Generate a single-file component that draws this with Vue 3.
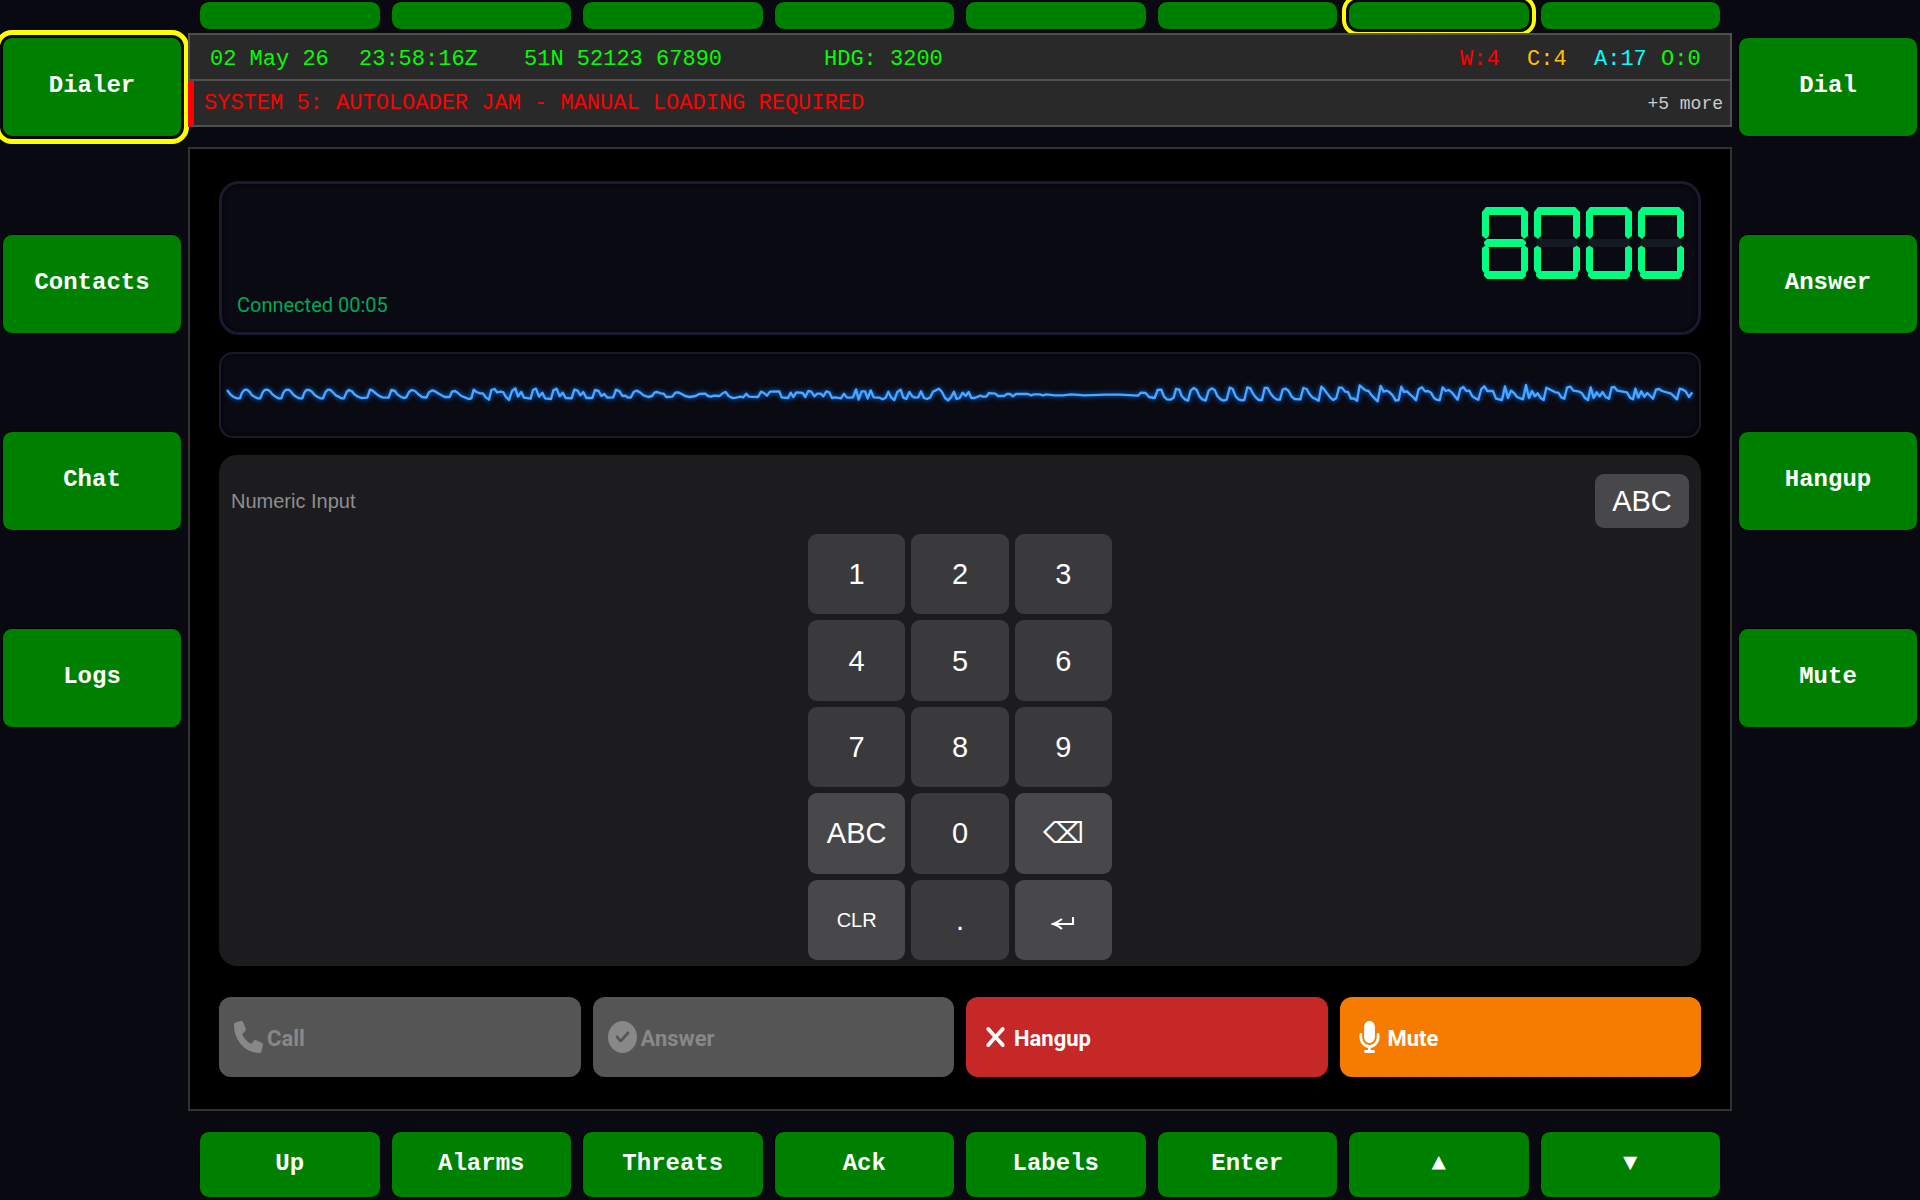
<script setup>
import { ref } from 'vue'

const topKeys = [1, 2, 3, 4, 5, 6, 7, 8]
const activeTop = ref(7)
const leftKeys = ['Dialer', 'Contacts', 'Chat', 'Logs']
const activeLeft = ref('Dialer')
const rightKeys = ['Dial', 'Answer', 'Hangup', 'Mute']
const bottomKeys = ['Up', 'Alarms', 'Threats', 'Ack', 'Labels', 'Enter', '▲', '▼']

const counters = [
  { text: 'W:4', cls: 'warning' },
  { text: 'C:4', cls: 'caution' },
  { text: 'A:17', cls: 'advisory' },
  { text: 'O:0', cls: 'other' },
]

// Seven-segment display: a top, b/c right, d bottom, e/f left, g middle
const segments = {
  a: '4,0 41,0 46,5 43,8 3,8 0,5',
  b: '46,5 42,3 39,7 39,29 42,32 46,29',
  c: '46,41 42,38 39,41 39,64 43,67 46,63',
  d: '2,67 5,64 41,64 44,67 44,69 41,72 5,72 2,69',
  e: '0,41 4,38 7,41 7,64 3,67 0,63',
  f: '0,5 4,3 7,7 7,29 4,32 0,29',
  g: '2,35 5,32 41,32 44,35 44,37 41,40 5,40 2,37',
}
const lit = { 8: 'abcdefg', 0: 'abcdef' }
const number = ref('8000')

// Audio trace, split into blocks; x is relative to the block start
const blocks = [
  {
    start: -52,
    samples:
      '52,150 62,163 72,171 82,175 91,175 97,158 104,150 112,149 120,156 127,166 136,171 144,175 152,175 159,157 165,150 174,149 182,155 188,163 198,170 206,175 215,175 221,158 228,150 237,149 244,155 252,165 261,171 269,175 278,175 284,158 290,150 299,150 307,155 315,165 323,170 332,175 340,175 347,157 354,149 362,150 370,157 378,166 387,170 395,175 403,175 411,156 418,150 427,154 434,163 445,170 455,174 473,173 481,149 489,152 497,159 507,167 518,172 537,173 545,150 556,153 563,163 573,170 582,174 590,172 598,156 606,150 616,153 625,162 637,171 650,173 658,157 668,151 678,155 690,163 705,171 720,171 727,155 736,153 745,159 755,168 767,173 777,177 785,175 792,149 800,156 812,160 820,160 828,172 838,179 845,150 855,147 862,157 873,155 881,157 888,170 898,180 907,153 917,145 925,170 935,156 943,173 963,176 970,150 979,146 988,170 998,158 1006,175 1024,177 1031,151 1041,146 1050,169 1059,158 1068,174 1086,175 1094,149 1104,152 1112,166 1121,156 1130,174 1148,174 1156,150 1167,153 1175,168 1184,162 1193,173 1211,172 1219,149 1230,154 1238,168 1247,167 1256,173 1264,172 1272,156 1281,152 1291,157 1302,166 1316,171 1327,168 1335,157 1343,156 1353,160 1362,161 1370,171 1388,170 1397,158 1406,157 1416,162 1426,168 1440,171 1458,168 1468,162 1487,161 1495,168 1505,170 1512,167',
  },
  {
    start: 1478,
    samples:
      '0,168 10,159 18,156 27,168 38,174 50,173 62,170 71,172 80,161 88,170 115,171 124,155 133,159 142,167 151,155 179,154 186,172 205,174 213,158 221,171 230,157 249,159 257,171 266,153 275,155 284,169 293,161 303,161 311,169 320,154 329,157 337,174 346,172 364,175 373,161 382,173 400,172 409,148 417,179 426,154 436,154 444,176 453,151 462,172 480,173 489,178 498,173 506,155 515,173 524,180 533,156 543,149 551,173 560,177 569,156 578,169 586,173 596,172 604,154 613,174 622,177 631,173 640,155 649,151 658,146 667,156 676,174 685,181 694,172 703,155 711,177 720,174 729,158 738,168 747,156 755,174 765,174 782,167 790,170 800,170 808,159 818,160 827,161 835,168 853,168 862,162 871,162 880,169 889,162 925,162 934,166 943,163 960,163 970,166 980,163 1005,166 1030,166 1055,163 1095,166 1160,164 1200,164 1255,167 1263,158 1278,159 1288,171 1305,174 1314,150 1325,149 1333,170 1342,178 1352,179 1362,173 1369,147 1379,149 1386,168 1396,178 1405,182 1413,152 1422,144 1431,150',
  },
  {
    start: 2918,
    samples:
      '0,170 8,178 18,182 27,152 36,145 45,150 53,168 63,178 72,182 81,179 90,143 99,147 108,169 117,178 126,181 134,180 143,142 152,145 161,163 170,174 178,180 187,180 195,144 204,144 213,161 222,172 232,179 241,179 249,149 258,146 267,153 276,170 285,177 302,178 311,144 321,147 330,163 338,172 348,177 357,182 365,140 374,149 383,161 392,173 401,180 410,174 418,143 427,143 436,155 445,156 454,176 463,175 472,183 480,136 489,144 498,151 507,153 516,166 525,175 534,184 543,138 552,155 561,152 570,157 579,166 588,182 597,180 605,140 613,156 622,154 631,163 640,171 649,181 657,148 667,142 676,154 685,153 694,158 703,174 711,179 720,181 729,142 738,153 747,150 756,157 765,168 774,179 782,147 791,141 800,153 809,152 818,169 827,175 836,179 845,147 854,139 863,153 880,153 889,176 907,180 916,139 925,174 934,152 943,159 952,171 970,178 979,135 988,174 997,153 1006,169 1014,160 1023,174 1032,180 1040,143 1067,157 1076,158 1085,172 1094,176 1102,143 1112,140 1121,152 1139,155 1147,160 1156,174 1165,180 1173,142 1182,174 1191,157 1200,169 1209,156 1218,171 1228,176 1236,142 1244,141 1253,152 1282,157 1291,173 1300,178 1307,146 1316,173 1325,154 1334,170 1343,159 1352,168 1360,176 1369,149 1378,147 1387,153 1414,161 1423,169 1432,178 1440,146 1450,149 1458,154 1468,171 1478,157',
  },
]
const trace = blocks
  .flatMap(({ start, samples }) =>
    samples.split(' ').map((pair) => {
      const [x, y] = pair.split(',').map(Number)
      return `${x + start},${y}`
    })
  )
  .join(' ')

const pad = [
  { label: '1' }, { label: '2' }, { label: '3' },
  { label: '4' }, { label: '5' }, { label: '6' },
  { label: '7' }, { label: '8' }, { label: '9' },
  { label: 'ABC', cls: 'function' }, { label: '0' }, { label: '⌫', cls: 'function', name: 'Backspace' },
  { label: 'CLR', cls: 'function small' }, { label: '.' }, { label: '', cls: 'function', name: 'Enter', icon: true },
]

const actions = [
  {
    label: 'Call', disabled: true, box: '0 0 512 512',
    icon: 'M164.9 24.6c-7.7-18.6-28-28.5-47.4-23.2l-88 24C12.1 30.2 0 46 0 64C0 311.4 200.6 512 448 512c18 0 33.8-12.1 38.6-29.5l24-88c5.3-19.4-4.6-39.7-23.2-47.4l-96-40c-16.3-6.8-35.2-2.1-46.3 11.6L304.7 368C234.3 334.7 177.3 277.7 144 207.3L193.3 167c13.7-11.2 18.4-30 11.6-46.3l-40-96z',
  },
  {
    label: 'Answer', disabled: true, box: '0 0 512 512',
    icon: 'M256 512A256 256 0 1 0 256 0a256 256 0 1 0 0 512zM369 209L241 337c-9.4 9.4-24.6 9.4-33.9 0l-64-64c-9.4-9.4-9.4-24.6 0-33.9s24.6-9.4 33.9 0l47 47L335 175c9.4-9.4 24.6-9.4 33.9 0s9.4 24.6 0 33.9z',
  },
  {
    label: 'Hangup', cls: 'hangup', box: '-64 0 512 512',
    icon: 'M342.6 150.6c12.5-12.5 12.5-32.8 0-45.3s-32.8-12.5-45.3 0L192 210.7 86.6 105.4c-12.5-12.5-32.8-12.5-45.3 0s-12.5 32.8 0 45.3L146.7 256 41.4 361.4c-12.5 12.5-12.5 32.8 0 45.3s32.8 12.5 45.3 0L192 301.3 297.4 406.6c12.5 12.5 32.8 12.5 45.3 0s12.5-32.8 0-45.3L237.3 256 342.6 150.6z',
  },
  {
    label: 'Mute', cls: 'mute', box: '-64 0 512 512',
    icon: 'M192 0C139 0 96 43 96 96V256c0 53 43 96 96 96s96-43 96-96V96c0-53-43-96-96-96zM64 216c0-13.3-10.7-24-24-24s-24 10.7-24 24v40c0 89.1 66.2 162.7 152 174.4V464H120c-13.3 0-24 10.7-24 24s10.7 24 24 24h72 72c13.3 0 24-10.7 24-24s-10.7-24-24-24H216V430.4c85.8-11.7 152-85.3 152-174.4V216c0-13.3-10.7-24-24-24s-24 10.7-24 24v40c0 70.7-57.3 128-128 128s-128-57.3-128-128V216z',
  },
]
</script>

<template>
  <div class="terminal">
    <nav class="side left" aria-label="Pages">
      <button
        v-for="key in leftKeys"
        :key="key"
        type="button"
        class="bezel"
        :class="{ active: key === activeLeft }"
        @click="activeLeft = key"
      >{{ key }}</button>
    </nav>

    <div class="centre">
      <nav class="row top" aria-label="Top keys">
        <button
          v-for="n in topKeys"
          :key="n"
          type="button"
          class="bezel"
          :class="{ active: n === activeTop }"
          :aria-label="'Top key ' + n"
          @click="activeTop = n"
        ></button>
      </nav>

      <header class="status">
        <div class="info">
          <span class="date">02 May 26</span>
          <span class="time">23:58:16Z</span>
          <span class="position">51N 52123 67890</span>
          <span class="heading">HDG: 3200</span>
          <span v-for="c in counters" :key="c.text" class="counter" :class="c.cls">{{ c.text }}</span>
        </div>
        <div class="alert">
          <span>SYSTEM 5: AUTOLOADER JAM - MANUAL LOADING REQUIRED</span>
          <span class="more">+5 more</span>
        </div>
      </header>

      <main class="panel">
        <section class="display">
          <div class="digits" role="img" :aria-label="number">
            <svg v-for="(digit, i) in number" :key="i" width="46" height="72" viewBox="0 0 46 72">
              <polygon
                v-for="(points, id) in segments"
                :key="id"
                :points="points"
                :fill="lit[digit].includes(id) ? '#00ff80' : '#151922'"
              />
            </svg>
          </div>
          <p class="state">Connected 00:05</p>
        </section>

        <section class="audio">
          <svg viewBox="0 42 4398 246" aria-hidden="true">
            <polyline :points="trace" />
          </svg>
        </section>

        <section class="input">
          <div class="input-head">
            <span>Numeric Input</span>
            <button type="button" class="key function">ABC</button>
          </div>
          <div class="pad">
            <button
              v-for="k in pad"
              :key="k.name || k.label"
              type="button"
              class="key"
              :class="k.cls"
              :aria-label="k.name"
            >
              <svg v-if="k.icon" width="24" height="14" viewBox="0 0 24 14" aria-hidden="true">
                <path d="M22 1v7H3M11 3Q7 6 2 8Q7 9 11 13" fill="none" stroke="currentColor" stroke-width="2" />
              </svg>
              <template v-else>{{ k.label }}</template>
            </button>
          </div>
        </section>

        <section class="actions">
          <button
            v-for="a in actions"
            :key="a.label"
            type="button"
            class="action"
            :class="a.cls"
            :disabled="a.disabled"
          >
            <svg width="29" height="32" :viewBox="a.box" preserveAspectRatio="none" aria-hidden="true">
              <path :d="a.icon" fill="currentColor" />
            </svg>
            <span>{{ a.label }}</span>
          </button>
        </section>
      </main>

      <nav class="row bottom" aria-label="Bottom keys">
        <button v-for="key in bottomKeys" :key="key" type="button" class="bezel">{{ key }}</button>
      </nav>
    </div>

    <nav class="side right" aria-label="Actions">
      <button v-for="key in rightKeys" :key="key" type="button" class="bezel">{{ key }}</button>
    </nav>
  </div>
</template>

<style>
body {
  margin: 0;
  background: #090911;
}
</style>

<style scoped>
.terminal {
  display: grid;
  grid-template-columns: 188px minmax(0, 1fr) 188px;
  min-height: 100vh;
  box-sizing: border-box;
  overflow: hidden;
  background: #090911;
  color: #fff;
  font-family: "Liberation Mono", "Courier New", monospace;
}

.terminal * {
  box-sizing: border-box;
}

.terminal button {
  margin: 0;
  font-family: inherit;
  cursor: pointer;
}

/* Bezel keys */
.bezel {
  border: 1px solid #000;
  border-radius: 10px;
  background: #008000;
  color: #fff;
  font-size: 24px;
  font-weight: 700;
  line-height: 28px;
  padding: 0 0 2px;
}

.bezel.active {
  outline: 4px solid #ff0;
  outline-offset: 2px;
}

.side {
  display: flex;
  flex-direction: column;
  gap: 97px;
}

.side .bezel {
  height: 100px;
}

.side .bezel.active {
  outline-width: 5px;
}

.left {
  padding: 37px 6px 0 2px;
}

.right {
  padding: 37px 2px 0 6px;
}

.centre {
  display: flex;
  flex-direction: column;
  min-width: 0;
}

.row {
  display: grid;
  grid-template-columns: repeat(8, minmax(0, 1fr));
  gap: 10px;
  padding: 0 11px;
}

.top {
  padding-top: 1px;
  margin-bottom: 3px;
}

.top .bezel {
  height: 29px;
}

.bottom {
  padding-bottom: 2px;
}

.bottom .bezel {
  height: 67px;
}

/* Status header */
.status {
  position: relative;
  z-index: 1;
  font-size: 22px;
  line-height: 26px;
  white-space: pre;
}

.info {
  display: flex;
  align-items: center;
  height: 48px;
  padding: 5px 2px 0 20px;
  border: 2px solid #505050;
  background: #292929;
  color: #0f0;
}

.date {
  width: 149px;
}

.time {
  width: 165px;
}

.position {
  width: 300px;
}

.heading {
  flex: 1;
}

.counter {
  width: 67px;
}

.warning {
  color: #f00;
}

.caution {
  color: #ffc107;
}

.advisory {
  color: #0ff;
}

.alert {
  display: flex;
  align-items: center;
  justify-content: space-between;
  height: 46px;
  padding: 2px 7px 0 10px;
  border: 2px solid #505050;
  border-top: 0;
  border-left: 6px solid #f00;
  background: #292929;
  color: #f00;
}

.more {
  color: #ccc;
  font-size: 18px;
}

/* Dialer panel */
.panel {
  display: flex;
  flex: 1;
  flex-direction: column;
  margin: 20px 0;
  padding: 32px 29px;
  border: 2px solid #333;
  background: #000;
}

.display {
  display: flex;
  flex-direction: column;
  justify-content: space-between;
  height: 154px;
  padding: 23px 14px 13px 15px;
  border: 3px solid #1a1a2e;
  border-radius: 20px;
  background: #0a0a12;
  box-shadow: inset 0 0 4px #000;
}

.digits {
  display: flex;
  gap: 6px;
  justify-content: flex-end;
}

.digits svg {
  display: block;
}

.state {
  margin: 0;
  color: #00a85a;
  font-family: Roboto, sans-serif;
  font-size: 20px;
  line-height: 28px;
}

.audio {
  margin-top: 17px;
  padding: 0 6px;
  border: 2px solid #1a1a2e;
  border-radius: 14px;
  background: #0a0a12;
  box-shadow: inset 0 0 4px #000;
}

.audio svg {
  display: block;
  width: 100%;
  overflow: visible;
}

.audio polyline {
  fill: none;
  stroke: #4da6ff;
  stroke-width: 7;
  stroke-linejoin: round;
  filter: drop-shadow(0 0 8px #0078ff);
}

/* Keypad */
.input {
  display: flex;
  flex: 1;
  flex-direction: column;
  align-items: center;
  gap: 6px;
  margin-top: 17px;
  padding: 19px 12px 6px;
  border-radius: 18px;
  background: #1c1c1e;
  font-family: "Liberation Sans", Arial, sans-serif;
}

.input-head {
  display: flex;
  align-self: stretch;
  align-items: center;
  justify-content: space-between;
  color: #8e8e93;
  font-size: 20px;
  line-height: 24px;
}

.pad {
  display: grid;
  flex: 1;
  grid-template-columns: repeat(3, 1fr);
  grid-auto-rows: 1fr;
  gap: 6px;
  width: 304px;
}

.key {
  padding: 0;
  border: 0;
  border-radius: 9px;
  background: #3a3a3c;
  color: #fff;
  font-size: 29px;
  line-height: 34px;
}

.key.function {
  background: #48484a;
}

.key.small {
  font-size: 20px;
}

.input-head .key {
  width: 94px;
  height: 54px;
}

/* Call actions */
.actions {
  display: grid;
  grid-template-columns: repeat(4, minmax(0, 1fr));
  gap: 12px;
  margin-top: 31px;
  font-family: Roboto, sans-serif;
}

.action {
  display: flex;
  gap: 4px;
  align-items: center;
  height: 80px;
  padding: 0 15px;
  border: 0;
  border-radius: 12px;
  color: #fff;
  font-size: 22px;
  font-weight: 700;
  line-height: 26px;
}

.action span {
  padding-top: 4px;
}

.action:disabled {
  background: #555;
  color: #888;
  cursor: default;
}

.hangup {
  background: #c62828;
}

.mute {
  background: #f57c00;
}
</style>
